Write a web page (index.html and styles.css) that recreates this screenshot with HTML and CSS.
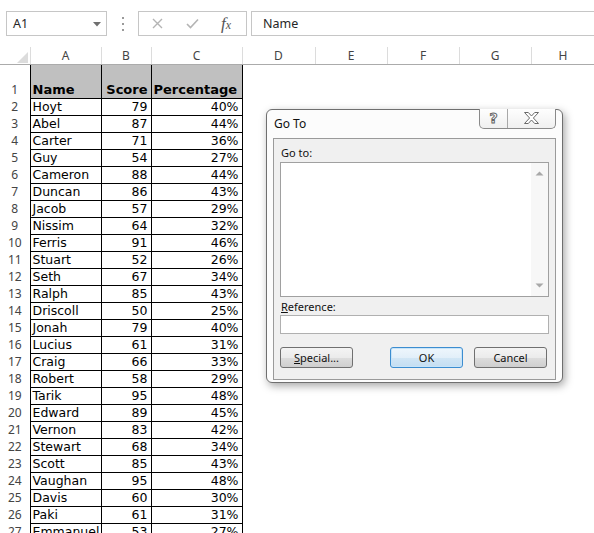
FILE: index.html
```html
<!DOCTYPE html>
<html lang="en">
<head>
  <meta charset="UTF-8">
  <title>Go To</title>
  <link rel="stylesheet" href="styles.css">
</head>
<body>
  <!-- Formula bar -->
  <div class="formula-bar">
    <div class="name-box">
      <span>A1</span>
      <svg class="drop" width="8" height="5" viewBox="0 0 8 5"><path d="M0 0H8L4 4.5Z" fill="#6f6f6f"/></svg>
    </div>
    <div class="bar-grip">
      <svg width="3" height="14" viewBox="0 0 3 14"><rect x="0" y="0" width="2" height="2" fill="#9a9a9a"/><rect x="0" y="6" width="2" height="2" fill="#9a9a9a"/><rect x="0" y="12" width="2" height="2" fill="#9a9a9a"/></svg>
    </div>
    <div class="fx-buttons">
      <svg width="11" height="11" viewBox="0 0 11 11"><path d="M1 1L10 10M10 1L1 10" stroke="#b4b4b4" stroke-width="1.4" fill="none"/></svg>
      <svg width="13" height="11" viewBox="0 0 13 11"><path d="M1 6L4.5 9.5L12 1.5" stroke="#b4b4b4" stroke-width="1.6" fill="none"/></svg>
      <span class="fx">f<small>x</small></span>
    </div>
    <div class="formula-input">Name</div>
  </div>

  <!-- Sheet -->
  <table class="sheet">
    <colgroup>
      <col class="w-rh"><col class="w-a"><col class="w-b"><col class="w-c"><col class="w-d"><col class="w-e"><col class="w-e"><col class="w-e"><col class="w-h">
    </colgroup>
    <tr class="col-head">
      <th class="corner"><svg width="11" height="11" viewBox="0 0 11 11"><path d="M11 0V11H0Z" fill="#dcdcdc"/></svg></th>
      <th>A</th><th>B</th><th>C</th><th>D</th><th>E</th><th>F</th><th>G</th><th>H</th>
    </tr>
    <tr class="r1"><td class="rh">1</td><td class="hd">Name</td><td class="hd">Score</td><td class="hd">Percentage</td><td></td><td></td><td></td><td></td><td></td></tr>
    <tr><td class="rh">2</td><td class="c">Hoyt</td><td class="c n">79</td><td class="c n">40%</td><td></td><td></td><td></td><td></td><td></td></tr>
    <tr><td class="rh">3</td><td class="c">Abel</td><td class="c n">87</td><td class="c n">44%</td><td></td><td></td><td></td><td></td><td></td></tr>
    <tr><td class="rh">4</td><td class="c">Carter</td><td class="c n">71</td><td class="c n">36%</td><td></td><td></td><td></td><td></td><td></td></tr>
    <tr><td class="rh">5</td><td class="c">Guy</td><td class="c n">54</td><td class="c n">27%</td><td></td><td></td><td></td><td></td><td></td></tr>
    <tr><td class="rh">6</td><td class="c">Cameron</td><td class="c n">88</td><td class="c n">44%</td><td></td><td></td><td></td><td></td><td></td></tr>
    <tr><td class="rh">7</td><td class="c">Duncan</td><td class="c n">86</td><td class="c n">43%</td><td></td><td></td><td></td><td></td><td></td></tr>
    <tr><td class="rh">8</td><td class="c">Jacob</td><td class="c n">57</td><td class="c n">29%</td><td></td><td></td><td></td><td></td><td></td></tr>
    <tr><td class="rh">9</td><td class="c">Nissim</td><td class="c n">64</td><td class="c n">32%</td><td></td><td></td><td></td><td></td><td></td></tr>
    <tr><td class="rh">10</td><td class="c">Ferris</td><td class="c n">91</td><td class="c n">46%</td><td></td><td></td><td></td><td></td><td></td></tr>
    <tr><td class="rh">11</td><td class="c">Stuart</td><td class="c n">52</td><td class="c n">26%</td><td></td><td></td><td></td><td></td><td></td></tr>
    <tr><td class="rh">12</td><td class="c">Seth</td><td class="c n">67</td><td class="c n">34%</td><td></td><td></td><td></td><td></td><td></td></tr>
    <tr><td class="rh">13</td><td class="c">Ralph</td><td class="c n">85</td><td class="c n">43%</td><td></td><td></td><td></td><td></td><td></td></tr>
    <tr><td class="rh">14</td><td class="c">Driscoll</td><td class="c n">50</td><td class="c n">25%</td><td></td><td></td><td></td><td></td><td></td></tr>
    <tr><td class="rh">15</td><td class="c">Jonah</td><td class="c n">79</td><td class="c n">40%</td><td></td><td></td><td></td><td></td><td></td></tr>
    <tr><td class="rh">16</td><td class="c">Lucius</td><td class="c n">61</td><td class="c n">31%</td><td></td><td></td><td></td><td></td><td></td></tr>
    <tr><td class="rh">17</td><td class="c">Craig</td><td class="c n">66</td><td class="c n">33%</td><td></td><td></td><td></td><td></td><td></td></tr>
    <tr><td class="rh">18</td><td class="c">Robert</td><td class="c n">58</td><td class="c n">29%</td><td></td><td></td><td></td><td></td><td></td></tr>
    <tr><td class="rh">19</td><td class="c">Tarik</td><td class="c n">95</td><td class="c n">48%</td><td></td><td></td><td></td><td></td><td></td></tr>
    <tr><td class="rh">20</td><td class="c">Edward</td><td class="c n">89</td><td class="c n">45%</td><td></td><td></td><td></td><td></td><td></td></tr>
    <tr><td class="rh">21</td><td class="c">Vernon</td><td class="c n">83</td><td class="c n">42%</td><td></td><td></td><td></td><td></td><td></td></tr>
    <tr><td class="rh">22</td><td class="c">Stewart</td><td class="c n">68</td><td class="c n">34%</td><td></td><td></td><td></td><td></td><td></td></tr>
    <tr><td class="rh">23</td><td class="c">Scott</td><td class="c n">85</td><td class="c n">43%</td><td></td><td></td><td></td><td></td><td></td></tr>
    <tr><td class="rh">24</td><td class="c">Vaughan</td><td class="c n">95</td><td class="c n">48%</td><td></td><td></td><td></td><td></td><td></td></tr>
    <tr><td class="rh">25</td><td class="c">Davis</td><td class="c n">60</td><td class="c n">30%</td><td></td><td></td><td></td><td></td><td></td></tr>
    <tr><td class="rh">26</td><td class="c">Paki</td><td class="c n">61</td><td class="c n">31%</td><td></td><td></td><td></td><td></td><td></td></tr>
    <tr><td class="rh">27</td><td class="c">Emmanuel</td><td class="c n">53</td><td class="c n">27%</td><td></td><td></td><td></td><td></td><td></td></tr>
  </table>

  <!-- Go To dialog -->
  <div class="dialog">
    <div class="dialog-title">
      <span class="title-text">Go To</span>
      <div class="title-buttons">
        <span class="tb-help">?</span>
        <span class="tb-close">
          <svg width="15" height="12" viewBox="0 0 15 12"><path d="M0.5 0.5H4.3L7.5 4L10.7 0.5H14.5L9.4 6L14.5 11.5H10.7L7.5 8L4.3 11.5H0.5L5.6 6Z" fill="#fff" stroke="#6a6a6a" stroke-width="1" stroke-linejoin="round"/></svg>
        </span>
      </div>
    </div>
    <div class="dialog-panel">
      <div class="field-label">Go to:</div>
      <div class="listbox">
        <div class="list-items"></div>
        <div class="list-scroll">
          <svg width="9" height="5" viewBox="0 0 9 5"><path d="M0.5 4.5L4.5 0.5L8.5 4.5Z" fill="#a8a8a8"/></svg>
          <svg width="9" height="5" viewBox="0 0 9 5"><path d="M0.5 0.5L4.5 4.5L8.5 0.5Z" fill="#a8a8a8"/></svg>
        </div>
      </div>
      <div class="field-label ref-label"><u>R</u>eference:</div>
      <div class="ref-input"></div>
      <div class="dialog-buttons">
        <button class="btn"><u>S</u>pecial...</button>
        <button class="btn btn-default">OK</button>
        <button class="btn btn-cancel">Cancel</button>
      </div>
    </div>
  </div>
</body>
</html>
```

FILE: styles.css
```css
/* Reset default styles */
* {
  margin: 0;
  padding: 0;
  box-sizing: border-box;
}

body {
  width: 594px;
  height: 533px;
  overflow: hidden;
  position: relative;
  background: #fff;
  font-family: "Noto Sans", "Open Sans", sans-serif;
  color: #222;
}

/* Formula bar */
.formula-bar {
  display: flex;
  align-items: flex-start;
  padding-top: 11px;
  height: 47px;
}

.name-box {
  width: 101px;
  height: 25px;
  margin-left: 6px;
  border: 1px solid #c6c6c6;
  display: flex;
  align-items: center;
  justify-content: space-between;
  padding: 0 5px 0 6px;
  font-size: 12.5px;
  color: #262626;
}

.name-box .drop {
  margin-top: 1px;
}

.bar-grip {
  width: 31px;
  height: 25px;
  display: flex;
  align-items: center;
  justify-content: center;
  padding-left: 1px;
}

.fx-buttons {
  width: 109px;
  height: 25px;
  border: 1px solid #c6c6c6;
  display: flex;
  align-items: center;
  padding-left: 13px;
}

.fx-buttons svg:nth-child(2) {
  margin-left: 23px;
}

.fx {
  margin-left: 22px;
  font-family: "Liberation Serif", serif;
  font-style: italic;
  font-size: 17px;
  color: #555;
  line-height: 1;
}

.fx small {
  font-size: 12px;
}

.formula-input {
  flex: 1;
  height: 25px;
  margin-left: 4px;
  margin-right: -4px;
  border: 1px solid #c6c6c6;
  padding-left: 11px;
  font-size: 12.5px;
  line-height: 23px;
  color: #262626;
}

/* Sheet grid */
.sheet {
  table-layout: fixed;
  border-collapse: collapse;
  width: 595px;
  font-family: "DejaVu Sans", Verdana, sans-serif;
  font-size: 12.5px;
  color: #000;
}

.w-rh { width: 30px; }
.w-a { width: 71px; }
.w-b { width: 50px; }
.w-c { width: 91px; }
.w-d { width: 73px; }
.w-e { width: 72px; }
.w-h { width: 64px; }

.col-head th {
  height: 17px;
  font-family: "Noto Sans", sans-serif;
  font-weight: normal;
  font-size: 12px;
  color: #444;
  border-right: 1px solid #dcdcdc;
  border-bottom: 1px solid #ababab;
  line-height: 15px;
  vertical-align: middle;
}

.col-head .corner {
  text-align: right;
  vertical-align: bottom;
  padding: 0 2px 1px 0;
  line-height: 0;
}

.sheet tr {
  height: 17px;
}

.sheet tr.r1 {
  height: 34px;
}

.sheet td {
  padding: 0 3px 0 2px;
  line-height: 16px;
  vertical-align: bottom;
  white-space: nowrap;
  overflow: hidden;
}

.sheet td.rh {
  font-family: "Noto Sans", sans-serif;
  font-size: 12px;
  color: #444;
  text-align: center;
  padding: 0;
}

.sheet td.hd {
  background: #c0c0c0;
  border: 1px solid #000;
  font-weight: bold;
  font-size: 13px;
}

.sheet td.c {
  border: 1px solid #000;
}

.sheet td.n,
.sheet td.hd:nth-child(3) {
  text-align: right;
}

/* Dialog */
.dialog {
  position: absolute;
  left: 266px;
  top: 109px;
  width: 297px;
  border: 1px solid #6f6f6f;
  border-radius: 6px;
  background: #fcfcfc;
  box-shadow: 2px 3px 9px rgba(0, 0, 0, 0.35);
  padding-bottom: 2px;
}

.dialog-title {
  height: 28px;
  display: flex;
  justify-content: space-between;
  align-items: flex-start;
}

.title-text {
  padding: 6px 0 0 7px;
  font-size: 12px;
  line-height: 16px;
  color: #111;
}

.title-buttons {
  display: flex;
  margin-top: -1px;
  margin-right: 6px;
  height: 20px;
  border: 1px solid #8a8a8a;
  border-top: none;
  border-radius: 0 0 5px 5px;
  background: linear-gradient(#fefefe, #f0f0f0);
}

.tb-help {
  width: 28px;
  border-right: 1px solid #a8a8a8;
  text-align: center;
  font-family: "DejaVu Sans", sans-serif;
  font-weight: bold;
  font-size: 14px;
  line-height: 19px;
  color: #fff;
  -webkit-text-stroke: 1px #666;
}

.tb-close {
  width: 47px;
  display: flex;
  align-items: center;
  justify-content: center;
  padding-bottom: 1px;
}

.dialog-panel {
  margin: 0 6px;
  border: 1px solid #9a9a9a;
  background: #f0f0f0;
  padding: 6px 6px 11px;
}

.field-label {
  font-size: 11px;
  line-height: 16px;
  color: #111;
  padding-left: 1px;
}

.listbox {
  margin-top: 1px;
  height: 135px;
  border: 1px solid #a0a0a0;
  background: #fff;
  display: flex;
}

.list-items {
  flex: 1;
}

.list-scroll {
  width: 17px;
  background: #f7f7f7;
  display: flex;
  flex-direction: column;
  justify-content: space-between;
  align-items: center;
  padding: 8px 0 8px;
}

.ref-label {
  margin-top: 2px;
}

.ref-input {
  height: 19px;
  border: 1px solid #b0b0b0;
  background: #fff;
}

.dialog-buttons {
  display: flex;
  margin-top: 13px;
}

.btn {
  width: 73px;
  height: 21px;
  border: 1px solid #707070;
  border-radius: 3px;
  background: linear-gradient(#f4f4f4, #ebebeb 50%, #dddddd 51%, #cfcfcf);
  font-family: "Noto Sans", sans-serif;
  font-size: 11px;
  color: #111;
  line-height: 18px;
}

.btn-default {
  margin-left: auto;
  border-color: #3c8dd0;
  background: linear-gradient(#eef6fc, #e2eff9 50%, #d2e6f5 51%, #c4def2);
  box-shadow: inset 0 0 0 1px #c8e4f8;
}

.btn-cancel {
  margin-left: 11px;
  margin-right: 2px;
}
```
